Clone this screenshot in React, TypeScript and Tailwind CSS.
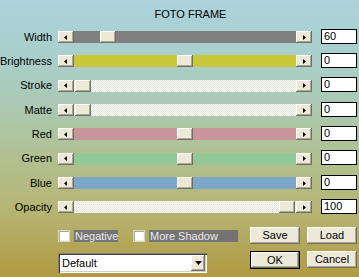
import React from "react";

const raised =
  "bg-[#ece9d8] shadow-[inset_-1px_-1px_#716f64,inset_1px_1px_#ffffff,inset_-2px_-2px_#aca899]";
const dither =
  "bg-[repeating-conic-gradient(#ffffff_0_25%,#e6e4d6_0_50%)] bg-[length:2px_2px]";

type Row = { label: string; track: string; pos: number; val: string; h: string };

const rows: Row[] = [
  { label: "Width", track: "bg-[#808080]", pos: 26, val: "60", h: "h-[24px]" },
  { label: "Brightness", track: "bg-[#c8c83a]", pos: 103, val: "0", h: "h-[24px]" },
  { label: "Stroke", track: dither, pos: 1, val: "0", h: "h-[25px]" },
  { label: "Matte", track: dither, pos: 1, val: "0", h: "h-[24px]" },
  { label: "Red", track: "bg-[#c8969b]", pos: 103, val: "0", h: "h-[24px]" },
  { label: "Green", track: "bg-[#93c898]", pos: 103, val: "0", h: "h-[25px]" },
  { label: "Blue", track: "bg-[#7ea6c8]", pos: 103, val: "0", h: "h-[24px]" },
  { label: "Opacity", track: dither, pos: 205, val: "100", h: "h-[24px]" },
];

function Arrow({ dir }: { dir: "l" | "r" | "d" }) {
  if (dir === "l")
    return (
      <svg width="4" height="5" viewBox="0 0 4 5">
        <path d="M3 0 L3 5 L0 2.5 Z" fill="#000" />
      </svg>
    );
  if (dir === "r")
    return (
      <svg width="4" height="5" viewBox="0 0 4 5">
        <path d="M1 0 L1 5 L4 2.5 Z" fill="#000" />
      </svg>
    );
  return (
    <svg width="7" height="4" viewBox="0 0 7 4">
      <path d="M0 0 L7 0 L3.5 4 Z" fill="#000" />
    </svg>
  );
}

function Slider({ track, pos }: { track: string; pos: number }) {
  return (
    <div className="flex w-[254px] h-[12px]">
      <div className={`w-[16px] h-full flex items-center justify-center ${raised}`}>
        <Arrow dir="l" />
      </div>
      <div className={`relative flex-1 h-full ${track}`}>
        <div
          className={`absolute top-0 w-[16px] h-full ${raised}`}
          style={{ left: pos }}
        />
      </div>
      <div className={`w-[16px] h-full flex items-center justify-center ${raised}`}>
        <Arrow dir="r" />
      </div>
    </div>
  );
}

function Check({ label, w }: { label: string; w: string }) {
  return (
    <div className="flex items-center">
      <div className="w-[12px] h-[12px] bg-white shadow-[inset_1px_1px_#aca899,inset_-1px_-1px_#f4f3ee] border border-[#d8d6c8]" />
      <div
        className={`ml-[4px] h-[12px] ${w} bg-[#737373] text-[#ececec] text-[11px] leading-[12px] pl-[1px]`}
      >
        {label}
      </div>
    </div>
  );
}

function Btn({ children, def }: { children: React.ReactNode; def?: boolean }) {
  return (
    <div
      className={`w-[50px] flex items-center justify-center text-[11px] text-black ${raised} ${
        def ? "h-[18px] outline outline-1 outline-black -outline-offset-1 border border-black" : "h-[17px]"
      }`}
    >
      {children}
    </div>
  );
}

export default function App() {
  return (
    <div className="w-[359px] h-[277px] overflow-hidden flex flex-col font-['Liberation_Sans',Arial,sans-serif] text-black bg-[linear-gradient(180deg,#abd4db_0%,#a9cfcc_20%,#abc8b0_40%,#b2bf8e_58%,#b5b676_75%,#b3a75a_88%,#b09b3e_100%)]">
      <div className="h-[25px] pt-[8px] pl-[22px] text-center text-[11px] leading-[13px]">
        FOTO FRAME
      </div>
      <div className="flex flex-col">
        {rows.map((r) => (
          <div key={r.label} className={`flex items-center ${r.h}`}>
            <div className="w-[52px] text-right text-[11px] leading-[13px]">{r.label}</div>
            <div className="ml-[6px]">
              <Slider track={r.track} pos={r.pos} />
            </div>
            <div className="ml-[9px] mb-[2px] w-[36px] h-[15px] bg-white border border-black text-[11px] leading-[13px] pl-[2px]">
              {r.val}
            </div>
          </div>
        ))}
      </div>
      <div className="mt-[8px] pl-[58px] flex h-[17px] items-center">
        <div className="w-[192px] flex items-center">
          <Check label="Negative" w="w-[44px]" />
          <div className="ml-[15px]">
            <Check label="More Shadow" w="w-[89px]" />
          </div>
        </div>
        <Btn>Save</Btn>
        <div className="ml-[7px]">
          <Btn>Load</Btn>
        </div>
      </div>
      <div className="mt-[7px] pl-[58px] flex items-start">
        <div className="mt-[2px] w-[149px] h-[20px] bg-white flex items-center justify-between shadow-[inset_1px_1px_#808080,inset_2px_2px_#404040,inset_-1px_-1px_#ffffff,inset_-2px_-2px_#d4d0c8]">
          <span className="pl-[4px] text-[11px] leading-[13px]">Default</span>
          <div className={`mr-[2px] w-[14px] h-[16px] flex items-center justify-center ${raised}`}>
            <Arrow dir="d" />
          </div>
        </div>
        <div className="ml-[43px]">
          <Btn def>OK</Btn>
        </div>
        <div className="ml-[7px]">
          <Btn>Cancel</Btn>
        </div>
      </div>
    </div>
  );
}
